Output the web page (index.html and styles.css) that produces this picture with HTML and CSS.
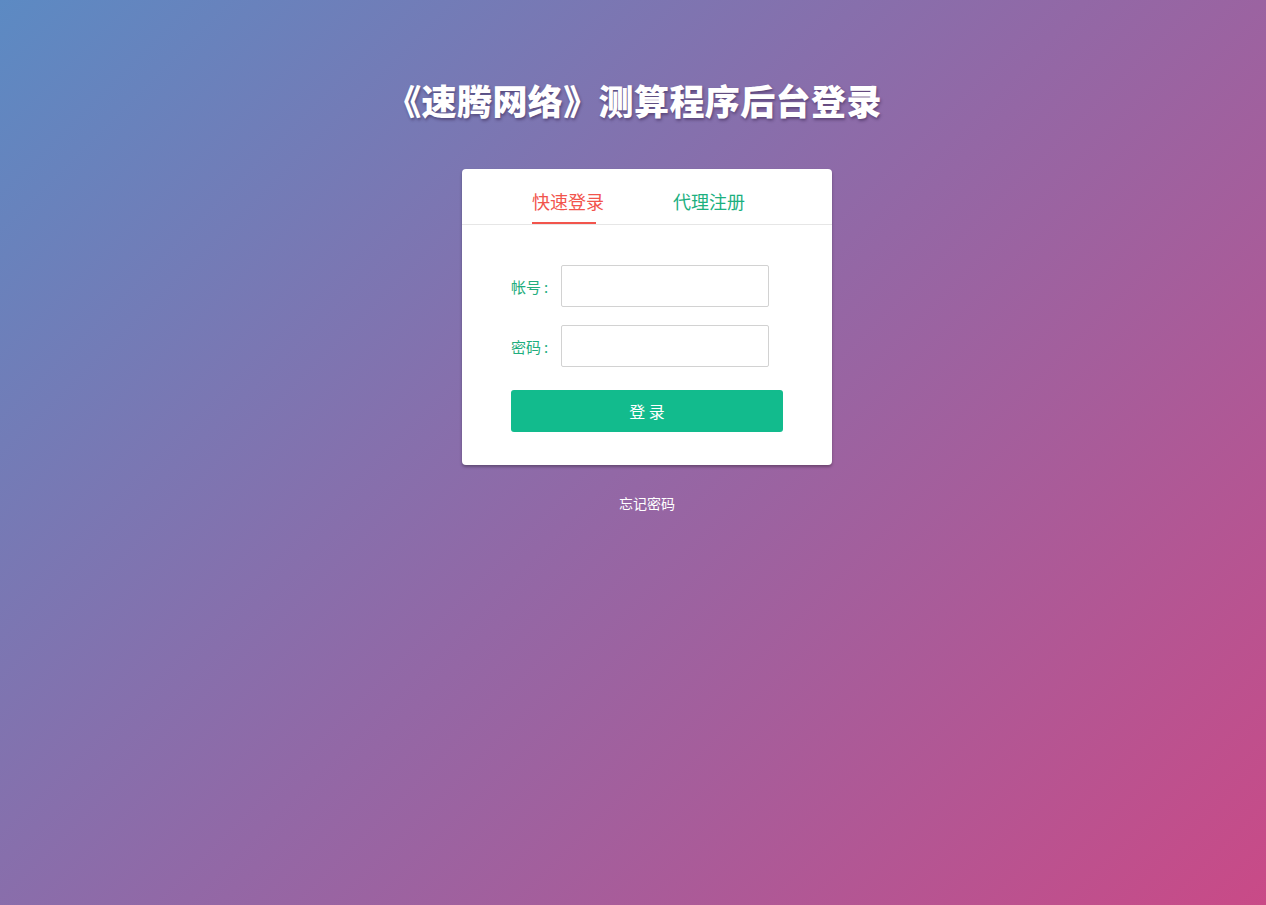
FILE: index.html
```html
<!DOCTYPE html>
<html lang="zh-CN">
<head>
<meta charset="utf-8">
<title>《速腾网络》测算程序后台登录</title>
<link rel="stylesheet" href="styles.css">
</head>
<body>
<div class="page">
  <h1 class="title">《速腾网络》测算程序后台登录</h1>
  <div class="card-wrap">
    <div class="card">
      <div class="tabs">
        <div class="tab active">快速登录</div>
        <div class="tab">代理注册</div>
      </div>
      <form class="form">
        <div class="row">
          <label class="label">帐号<span class="colon">:</span></label>
          <input class="input" type="text">
        </div>
        <div class="row">
          <label class="label">密码<span class="colon">:</span></label>
          <input class="input" type="password">
        </div>
        <button class="btn" type="button">登 录</button>
      </form>
    </div>
  </div>
  <div class="forgot">忘记密码</div>
</div>
</body>
</html>
```
FILE: styles.css
```css
html, body {
  margin: 0;
  padding: 0;
}
body {
  width: 1266px;
  height: 905px;
  overflow: hidden;
  font-family: "Noto Sans CJK SC", "Noto Sans", sans-serif;
  background: linear-gradient(135deg, #5c8ac3 0%, #9268a6 50%, #c94a87 100%);
}
.page {
  display: flex;
  flex-direction: column;
  align-items: center;
}
.title {
  margin: 80px 0 0 2px;
  font-size: 35px;
  line-height: 40px;
  font-weight: 900;
  color: #fff;
  letter-spacing: 0.4px;
  text-shadow: 1px 2px 3px rgba(40, 20, 60, 0.45);
}
.card-wrap {
  margin-top: 49px;
  padding-left: 28px;
  display: flex;
  justify-content: center;
}
.card {
  width: 370px;
  background: #fff;
  border-radius: 4px;
  box-shadow: 0 2px 3px rgba(0, 0, 0, 0.3);
  padding-bottom: 33px;
}
.tabs {
  display: flex;
  gap: 69px;
  padding-left: 70px;
  height: 56px;
  border-bottom: 1px solid #e6e6e6;
  box-sizing: border-box;
}
.tab {
  font-size: 18px;
  line-height: 26px;
  padding-top: 19px;
  color: #1cb07f;
  position: relative;
}
.tab.active {
  color: #f2544c;
}
.tab.active::after {
  content: "";
  position: absolute;
  left: 0;
  bottom: 0;
  width: 64px;
  height: 2px;
  background: #f2544c;
}
.form {
  margin: 0;
  padding: 40px 0 0 49px;
  display: flex;
  flex-direction: column;
}
.row {
  display: flex;
  align-items: center;
  margin-bottom: 18px;
}
.label {
  width: 50px;
  font-size: 15px;
  color: #1fae7e;
}
.colon {
  margin-left: 3px;
}
.input {
  width: 208px;
  height: 42px;
  box-sizing: border-box;
  border: 1px solid #d2d2d2;
  border-radius: 2px;
  margin: 0;
  padding: 0 8px;
  outline: none;
}
.btn {
  margin-top: 5px;
  width: 272px;
  height: 42px;
  border: none;
  border-radius: 3px;
  background: #12bb8d;
  color: #fff;
  font-family: "Noto Sans CJK SC", "Noto Sans", sans-serif;
  font-size: 16px;
  cursor: pointer;
}
.forgot {
  margin: 30px 0 0 28px;
  font-size: 14px;
  line-height: 16px;
  color: #fff;
}
```
